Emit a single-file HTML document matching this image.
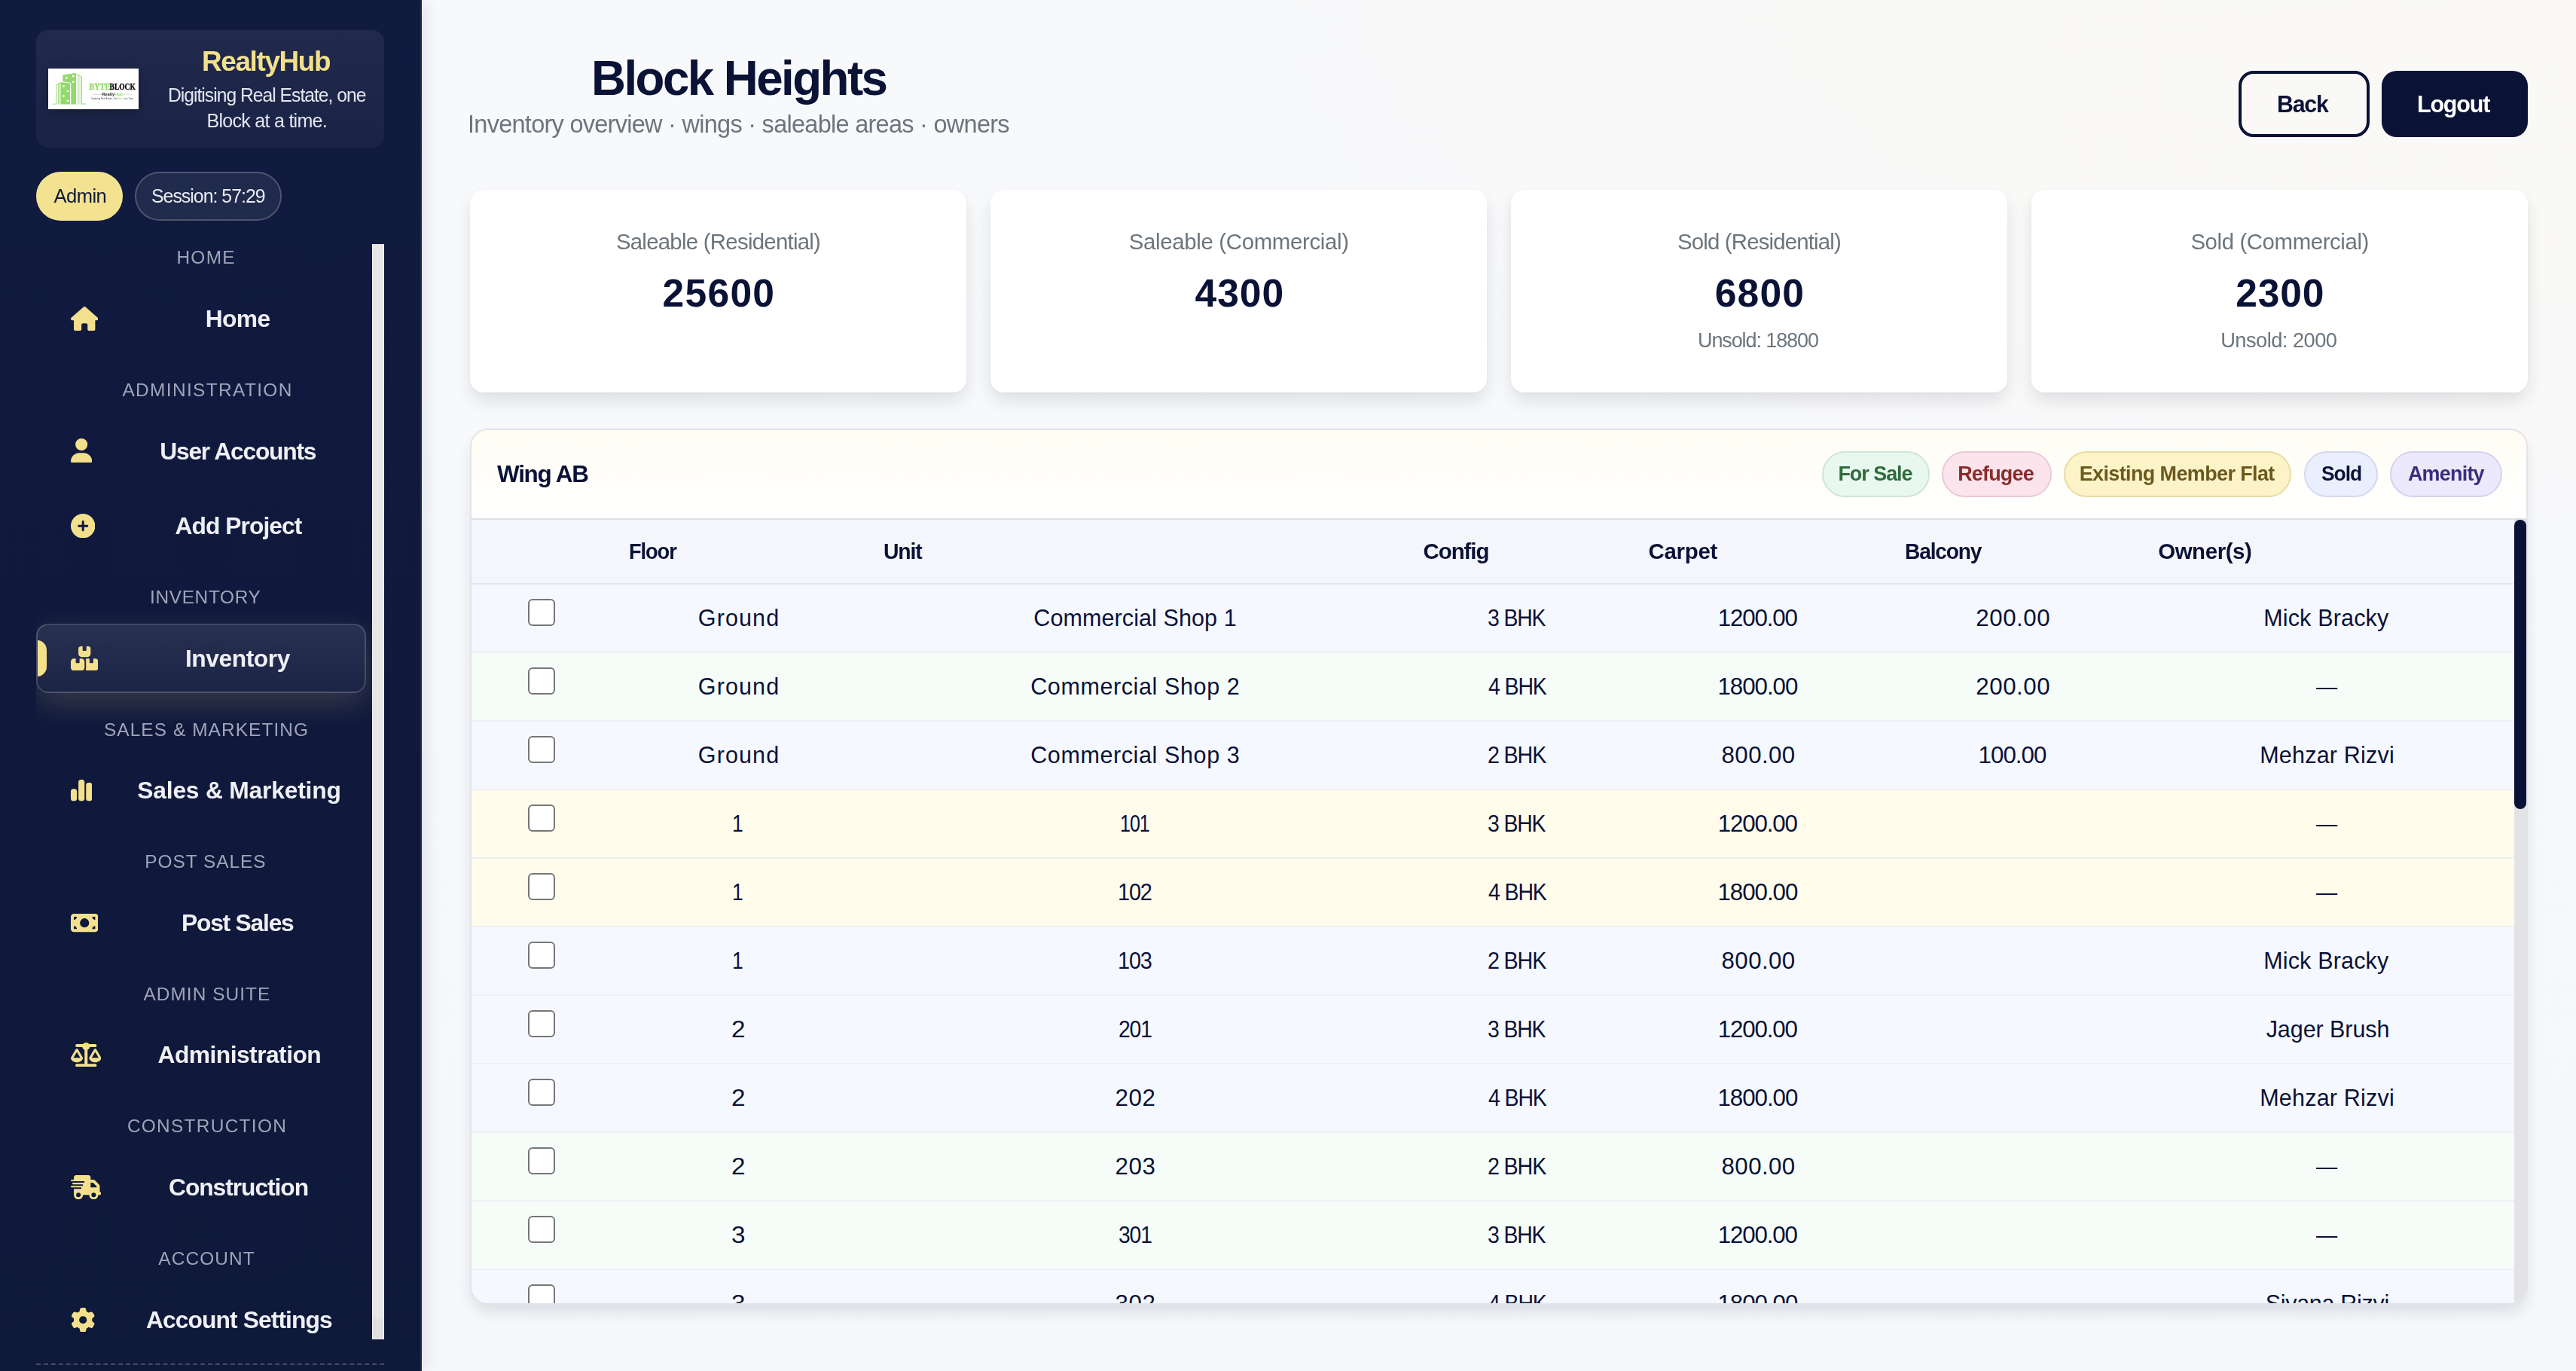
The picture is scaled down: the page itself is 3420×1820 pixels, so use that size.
<!DOCTYPE html>
<html lang="en"><head><meta charset="utf-8"><title>Block Heights – RealtyHub</title>
<style>
*{box-sizing:border-box;margin:0;padding:0}
html,body{width:3420px;height:1820px;overflow:hidden}
body{position:relative;font-family:"Liberation Sans",sans-serif;background:#f6f7fb;
 background-image:radial-gradient(2500px 1000px at 100% 0%,#faf9f6 0%,rgba(250,249,246,.85) 30%,rgba(250,249,246,0) 72%),linear-gradient(180deg,#f8f9fb 0%,#f6f7fb 100%)}
.t{position:absolute;white-space:nowrap;display:block;transform-origin:0 50%}
.ic{position:absolute;display:block}
.abs{position:absolute;display:block}
#side{position:absolute;left:0;top:0;width:560px;height:1820px;background:linear-gradient(180deg,#111b40 0%,#10193c 50%,#0f193a 100%);
 border-right:2px solid #222b4d;box-shadow:4px 0 24px rgba(0,0,0,.11);overflow:hidden}
#brand{left:48px;top:40px;width:462px;height:156px;border-radius:16px;background:linear-gradient(180deg,rgba(255,255,255,.065),rgba(255,255,255,.04))}
#logo{left:64px;top:91px;width:120px;height:54px;background:#fff;box-shadow:0 4px 12px rgba(0,0,0,.28)}
.pill{position:absolute;border-radius:999px}
#navclip{position:absolute;left:48px;top:324px;width:462px;height:1454px;overflow:hidden}
#active{position:absolute;left:0;top:504px;width:437.5px;height:91.5px;border-radius:16px;border:2px solid rgba(255,255,255,.17);
 background:linear-gradient(180deg,rgba(255,255,255,.105),rgba(255,255,255,.05));box-shadow:0 14px 40px rgba(243,224,140,.17);overflow:hidden}
#active i{position:absolute;left:-14px;top:19.5px;width:26px;height:48px;border-radius:13px;background:#f3e08c}
#sbar{position:absolute;left:446px;top:0;width:16px;height:1454px;background:#dfdfdf;border-left:1px solid #f2f2f2;border-right:1px solid #f2f2f2;border-bottom:1px solid #f2f2f2}
#sbar b{position:absolute;left:0;top:0;width:14px;height:1427px;border-radius:0 0 7px 7px;background:#e6e6e6}
#dash{left:48px;top:1810px;width:462px;height:0;border-top:2px dashed rgba(255,255,255,.22)}
.btn{position:absolute;top:94px;height:88px;border-radius:20px}
.card{position:absolute;top:252px;width:659px;height:269px;border-radius:18px;background:#fff;box-shadow:0 12px 26px rgba(12,16,40,.105),0 2px 5px rgba(12,16,40,.03)}
#panel{position:absolute;left:624px;top:569px;width:2732px;height:1163px;border-radius:24px;border:2px solid #e1e4ea;background:#fff;overflow:hidden;
 box-shadow:0 12px 24px -4px rgba(10,12,30,.13)}
#phead{position:absolute;left:0;top:0;width:100%;height:119px;background:linear-gradient(180deg,#fffdf3 0%,#fffefa 55%,#fff 100%);border-bottom:2px solid #dedfe3}
#thead{position:absolute;left:0;top:119px;width:2712px;height:86px;background:#f5f6fb;border-bottom:2px solid #e4e6ec}
.row{position:absolute;left:0;width:2712px;height:91px;border-bottom:2px solid #eff0f5}
.row.s{background:#f6f8ff}.row.f{background:#f6fdf9}.row.e{background:#fffcec}
.cb{position:absolute;left:74.5px;width:36px;height:36px;border:2px solid #767676;border-radius:6px;background:#fff}
#track{position:absolute;right:0;top:119px;width:16px;height:1040px;background:#e3e3e5}
#thumb{position:absolute;right:0;top:119px;width:16px;height:384px;border-radius:8px;background:#0a1236}
#wrap{position:absolute;left:0;top:0;width:3420px;height:1820px;opacity:.999}
</style></head><body><div id="wrap">

<div id="side">
<div class="abs" id="brand"></div>
<div class="abs" id="logo"><svg width="120" height="54" viewBox="0 0 120 54" style="display:block;will-change:transform"><g fill="#93d96b"><path d="M19.3 8.6 36.3 6.1 37 6.4V47.4H30.3V20.3Q30.1 18.9 28.8 18.7L19.3 16.9Z"/><path d="M16.5 18.1 28.4 19.5Q29 19.7 29 20.4V47.4H16.5Z"/><path d="M10.3 21.8 12 20.8V47.4H10.3Z" opacity=".55"/><path d="M13.1 20.2 13.9 19.7V47.4H13.1Z"/><path d="M14.8 19.2 15.7 18.6V47.4H14.8Z"/><path d="M10.3 21.8 16.5 18.1 16.5 19 10.8 22.4Z"/><path d="M37 6.4 45 11.2V46.6H50v.9H44.1V11.8L37 7.5Z"/><path d="M39.3 8.3 40.3 8.9V47.4H39.3Z"/><path d="M41.6 9.7 42.3 10.1V47.4H41.6Z" opacity=".7"/><path d="M42.9 10.5 43.5 10.9V47.4H42.9Z" opacity=".5"/><path d="M6 46.6H10.6V47.5H6Z"/></g><g fill="#fff"><rect x="23.1" y="11.3" width="2.4" height="2.4"/><rect x="32" y="8.9" width="2.4" height="2.4"/><rect x="32" y="16.4" width="2.4" height="2.4"/><rect x="19.2" y="22.3" width="2.4" height="2.4"/><rect x="24.7" y="28.8" width="2.4" height="2.4"/><rect x="19.2" y="35.3" width="2.4" height="2.4"/><rect x="24.7" y="41.6" width="2.4" height="2.4"/></g><text x="54.6" y="28" font-family="Liberation Serif,serif" font-weight="700" font-size="11.6" textLength="27.2" lengthAdjust="spacingAndGlyphs" fill="#8fd868" stroke="#8fd868" stroke-width=".35">BYTE</text><text x="81.6" y="28" font-family="Liberation Serif,serif" font-weight="700" font-size="11.6" textLength="34.2" lengthAdjust="spacingAndGlyphs" fill="#0a0a0a" stroke="#0a0a0a" stroke-width=".35">BLOCK</text><path d="M59.1 34.2H71M99.3 34.2H111.1" stroke="#c9c9c9" stroke-width=".7"/><text x="71.2" y="35.7" font-family="Liberation Sans,sans-serif" font-weight="700" font-size="4.6" textLength="17" lengthAdjust="spacingAndGlyphs" fill="#1a1a1a">Realty</text><text x="88.2" y="35.7" font-family="Liberation Sans,sans-serif" font-weight="700" font-size="4.6" textLength="11" lengthAdjust="spacingAndGlyphs" fill="#93d96b">Hub</text><text x="57.3" y="40.8" font-family="Liberation Sans,sans-serif" font-size="2.7" textLength="55.7" lengthAdjust="spacingAndGlyphs" fill="#444">Digitising Real Estate, One <tspan fill="#93d96b">Block</tspan> at a Time</text></svg>
</div>
<div class="pill" style="left:48px;top:228px;width:115px;height:65px;background:#f3e28f"></div>
<div class="pill" style="left:179px;top:228px;width:195px;height:65px;background:rgba(255,255,255,.07);border:2px solid rgba(255,255,255,.2)"></div>
<div id="navclip"><div id="active"><i></i></div><div id="sbar"><b></b></div></div>
<svg class="ic" style="left:93.7px;top:406.6px;width:36.45px;height:32.4px" viewBox="0 0 576 512"><path fill="#f3e08c" d="M575.8 255.5c0 18-15 32.100-32 32.100h-32l.700 160.200c0 2.700-.200 5.400-.500 8.100V472c0 22.100-17.900 40-40 40H456c-1.100 0-2.200 0-3.300-.100c-1.400 .100-2.800 .100-4.200 .100H416 392c-22.100 0-40-17.900-40-40V448 384c0-17.700-14.300-32-32-32H256c-17.700 0-32 14.300-32 32v64 24c0 22.100-17.900 40-40 40H160 128.100c-1.500 0-3-.100-4.500-.200c-1.200 .100-2.400 .200-3.600 .200H104c-22.100 0-40-17.900-40-40V360c0-.900 0-1.900 .100-2.800V287.600H32c-18 0-32-14-32-32.100c0-9 3-17 10-24L266.400 8c7-7 15-8 22-8s15 2 21.100 7L564.800 231.500c8 7 12 15 11 24z"/></svg>
<svg class="ic" style="left:93.7px;top:582.1px;width:28.35px;height:32.4px" viewBox="0 0 448 512"><path fill="#f3e08c" d="M224 256A128 128 0 1 0 224 0a128 128 0 1 0 0 256zm-45.700 48C79.800 304 0 383.800 0 482.300C0 498.700 13.300 512 29.700 512H418.300c16.400 0 29.700-13.300 29.700-29.700C448 383.800 368.200 304 269.700 304H178.300z"/></svg>
<svg class="ic" style="left:93.7px;top:681.6px;width:32.4px;height:32.4px" viewBox="0 0 512 512"><path fill="#f3e08c" d="M256 512A256 256 0 1 0 256 0a256 256 0 1 0 0 512zM232 344V280H168c-13.300 0-24-10.700-24-24s10.700-24 24-24h64V168c0-13.300 10.700-24 24-24s24 10.700 24 24v64h64c13.300 0 24 10.700 24 24s-10.700 24-24 24H280v64c0 13.300-10.700 24-24 24s-24-10.700-24-24z"/></svg>
<svg class="ic" style="left:93.7px;top:857.6px;width:36.45px;height:32.4px" viewBox="0 0 576 512"><path fill="#f3e08c" d="M248 0H208c-26.500 0-48 21.500-48 48V160c0 35.300 28.700 64 64 64H352c35.300 0 64-28.700 64-64V48c0-26.500-21.500-48-48-48H328V80c0 8.800-7.200 16-16 16H264c-8.800 0-16-7.200-16-16V0zM64 256c-35.300 0-64 28.700-64 64V448c0 35.300 28.700 64 64 64H224c35.300 0 64-28.700 64-64V320c0-35.300-28.700-64-64-64H184v80c0 8.800-7.200 16-16 16H120c-8.800 0-16-7.200-16-16V256H64zM352 512H512c35.300 0 64-28.700 64-64V320c0-35.300-28.700-64-64-64H472v80c0 8.800-7.200 16-16 16H408c-8.800 0-16-7.200-16-16V256H352c-15 0-28.800 5.100-39.700 13.800c4.900 10.400 7.700 22 7.700 34.200V464c0 12.200-2.800 23.800-7.700 34.200C323.200 506.900 337 512 352 512z"/></svg>
<svg class="ic" style="left:93.7px;top:1032.7px;width:28.35px;height:32.4px" viewBox="0 0 448 512"><path fill="#f3e08c" d="M160 80c0-26.500 21.500-48 48-48h32c26.500 0 48 21.500 48 48V432c0 26.500-21.500 48-48 48H208c-26.500 0-48-21.500-48-48V80zM0 272c0-26.500 21.500-48 48-48H80c26.500 0 48 21.500 48 48V432c0 26.500-21.500 48-48 48H48c-26.500 0-48-21.500-48-48V272zM368 96h32c26.500 0 48 21.500 48 48V432c0 26.500-21.500 48-48 48H368c-26.500 0-48-21.500-48-48V144c0-26.500 21.500-48 48-48z"/></svg>
<svg class="ic" style="left:93.7px;top:1208.8px;width:36.45px;height:32.4px" viewBox="0 0 576 512"><path fill="#f3e08c" d="M64 64C28.700 64 0 92.700 0 128V384c0 35.300 28.700 64 64 64H512c35.300 0 64-28.700 64-64V128c0-35.300-28.700-64-64-64H64zm64 320H64V320c35.300 0 64 28.700 64 64zM64 192V128h64c0 35.300-28.700 64-64 64zM448 384c0-35.300 28.700-64 64-64v64H448zm64-192c-35.300 0-64-28.700-64-64h64v64zM288 160a96 96 0 1 1 0 192 96 96 0 1 1 0-192z"/></svg>
<svg class="ic" style="left:93.7px;top:1383.9px;width:40.5px;height:32.4px" viewBox="0 0 640 512"><path fill="#f3e08c" d="M384 32H512c17.700 0 32 14.300 32 32s-14.300 32-32 32H398.400c-5.200 25.800-22.900 47.100-46.400 57.300V448H512c17.700 0 32 14.300 32 32s-14.300 32-32 32H320 128c-17.700 0-32-14.300-32-32s14.300-32 32-32H288V153.300c-23.500-10.300-41.200-31.600-46.400-57.300H128c-17.700 0-32-14.300-32-32s14.300-32 32-32H256c14.600-19.400 37.800-32 64-32s49.400 12.600 64 32zm55.600 288H584.400L512 195.800 439.600 320zM512 416c-62.900 0-115.200-34-126-78.900c-2.600-11 1-22.300 6.700-32.100l95.200-163.200c5-8.600 14.200-13.800 24.100-13.800s19.100 5.300 24.100 13.800l95.200 163.200c5.700 9.800 9.300 21.100 6.700 32.100C627.200 382 574.900 416 512 416zM126.800 195.800L54.400 320H199.300L126.800 195.800zM.9 337.100c-2.600-11 1-22.300 6.700-32.100l95.200-163.200c5-8.600 14.200-13.800 24.100-13.800s19.100 5.300 24.100 13.800l95.200 163.200c5.700 9.800 9.300 21.100 6.700 32.100C242 382 189.700 416 126.800 416S11.700 382 .9 337.100z"/></svg>
<svg class="ic" style="left:93.7px;top:1560.0px;width:40.5px;height:32.4px" viewBox="0 0 640 512"><path fill="#f3e08c" d="M112 0C85.500 0 64 21.500 64 48V96H16c-8.800 0-16 7.200-16 16s7.200 16 16 16H64 272c8.800 0 16 7.200 16 16s-7.200 16-16 16H64 48c-8.800 0-16 7.200-16 16s7.200 16 16 16H64 240c8.800 0 16 7.200 16 16s-7.200 16-16 16H64 16c-8.800 0-16 7.200-16 16s7.200 16 16 16H64 208c8.800 0 16 7.200 16 16s-7.200 16-16 16H64V416c0 53 43 96 96 96s96-43 96-96H384c0 53 43 96 96 96s96-43 96-96h32c17.700 0 32-14.300 32-32s-14.300-32-32-32V288 256 237.300c0-17-6.700-33.300-18.700-45.300L512 114.700c-12-12-28.300-18.700-45.300-18.700H416V48c0-26.500-21.500-48-48-48H112zM544 237.300V256H416V160h50.700L544 237.300zM160 368a48 48 0 1 1 0 96 48 48 0 1 1 0-96zm272 48a48 48 0 1 1 96 0 48 48 0 1 1 -96 0z"/></svg>
<svg class="ic" style="left:93.7px;top:1735.7px;width:32.4px;height:32.4px" viewBox="0 0 512 512"><path fill="#f3e08c" d="M495.900 166.600c3.200 8.700 .500 18.400-6.400 24.600l-43.300 39.400c1.100 8.300 1.700 16.800 1.700 25.400s-.600 17.100-1.700 25.400l43.300 39.400c6.900 6.200 9.600 15.900 6.400 24.600c-4.400 11.900-9.700 23.300-15.800 34.300l-4.700 8.100c-6.600 11-14 21.400-22.100 31.200c-5.900 7.200-15.700 9.600-24.500 6.800l-55.700-17.700c-13.400 10.300-28.200 18.900-44 25.400l-12.500 57.100c-2 9.100-9 16.300-18.200 17.800c-13.800 2.300-28 3.500-42.500 3.500s-28.700-1.200-42.500-3.500c-9.200-1.500-16.200-8.700-18.200-17.800l-12.500-57.100c-15.800-6.500-30.600-15.100-44-25.400L83.100 425.900c-8.800 2.800-18.600 .300-24.500-6.800c-8.100-9.800-15.500-20.200-22.100-31.200l-4.700-8.100c-6.100-11-11.400-22.400-15.800-34.300c-3.200-8.700-.500-18.400 6.400-24.600l43.300-39.400C64.600 273.100 64 264.600 64 256s.600-17.100 1.700-25.400L22.400 191.200c-6.900-6.200-9.600-15.900-6.400-24.600c4.400-11.900 9.700-23.300 15.800-34.300l4.700-8.100c6.600-11 14-21.400 22.100-31.200c5.900-7.200 15.700-9.600 24.500-6.800l55.700 17.700c13.400-10.300 28.200-18.900 44-25.400l12.500-57.100c2-9.100 9-16.300 18.200-17.800C227.300 1.200 241.500 0 256 0s28.700 1.200 42.500 3.500c9.200 1.500 16.200 8.700 18.200 17.800l12.500 57.100c15.800 6.500 30.600 15.100 44 25.400l55.700-17.700c8.800-2.800 18.600-.300 24.500 6.800c8.100 9.800 15.500 20.200 22.100 31.200l4.700 8.100c6.100 11 11.400 22.400 15.800 34.300zM256 336a80 80 0 1 0 0-160 80 80 0 1 0 0 160z"/></svg>
<div class="abs" id="dash"></div>
<span class="t" style="left:268.0px;top:61.2px;font-size:36.88px;line-height:41px;color:#f3e08c;font-weight:700;letter-spacing:-1.354px;">RealtyHub</span>
<span class="t" style="left:222.54px;top:111.7px;font-size:25.11px;line-height:28px;color:#e3e5ef;letter-spacing:-1.004px;transform:scaleX(0.9815);">Digitising Real Estate, one</span>
<span class="t" style="left:274.5px;top:146.4px;font-size:25.11px;line-height:28px;color:#e3e5ef;letter-spacing:-0.758px;">Block at a time.</span>
<span class="t" style="left:71.4px;top:246px;font-size:25.53px;line-height:28px;color:#10183a;letter-spacing:-0.483px;">Admin</span>
<span class="t" style="left:201.03px;top:246px;font-size:25.53px;line-height:28px;color:#e9ebf3;letter-spacing:-1.021px;transform:scaleX(0.9743);">Session: 57:29</span>
<span class="t" style="left:234.4px;top:328px;font-size:24.42px;line-height:27px;color:#a0a4b8;letter-spacing:1.32px;">HOME</span>
<span class="t" style="left:162.4px;top:504.2px;font-size:24.42px;line-height:27px;color:#a0a4b8;letter-spacing:1.379px;">ADMINISTRATION</span>
<span class="t" style="left:199.0px;top:779.2px;font-size:24.42px;line-height:27px;color:#a0a4b8;letter-spacing:0.659px;">INVENTORY</span>
<span class="t" style="left:137.9px;top:954.6px;font-size:24.42px;line-height:27px;color:#a0a4b8;letter-spacing:1.091px;">SALES &amp; MARKETING</span>
<span class="t" style="left:192.2px;top:1129.9px;font-size:24.42px;line-height:27px;color:#a0a4b8;letter-spacing:0.984px;">POST SALES</span>
<span class="t" style="left:190.5px;top:1306.2px;font-size:24.42px;line-height:27px;color:#a0a4b8;letter-spacing:1.038px;">ADMIN SUITE</span>
<span class="t" style="left:168.9px;top:1481px;font-size:24.42px;line-height:27px;color:#a0a4b8;letter-spacing:1.303px;">CONSTRUCTION</span>
<span class="t" style="left:210.3px;top:1657.3px;font-size:24.42px;line-height:27px;color:#a0a4b8;letter-spacing:1.123px;">ACCOUNT</span>
<span class="t" style="left:272.8px;top:405px;font-size:31.77px;line-height:36px;color:#eff0f6;font-weight:700;letter-spacing:-0.663px;">Home</span>
<span class="t" style="left:212.3px;top:580.5px;font-size:31.77px;line-height:36px;color:#eff0f6;font-weight:700;letter-spacing:-1.244px;">User Accounts</span>
<span class="t" style="left:232.4px;top:680px;font-size:31.77px;line-height:36px;color:#eff0f6;font-weight:700;letter-spacing:-0.928px;">Add Project</span>
<span class="t" style="left:246.0px;top:856px;font-size:31.77px;line-height:36px;color:#eff0f6;font-weight:700;letter-spacing:-0.451px;">Inventory</span>
<span class="t" style="left:182.3px;top:1031.1px;font-size:31.77px;line-height:36px;color:#eff0f6;font-weight:700;letter-spacing:-0.196px;">Sales &amp; Marketing</span>
<span class="t" style="left:241.0px;top:1207.2px;font-size:31.77px;line-height:36px;color:#eff0f6;font-weight:700;letter-spacing:-1.212px;">Post Sales</span>
<span class="t" style="left:209.6px;top:1382.3px;font-size:31.77px;line-height:36px;color:#eff0f6;font-weight:700;letter-spacing:-0.54px;">Administration</span>
<span class="t" style="left:224.0px;top:1558.4px;font-size:31.77px;line-height:36px;color:#eff0f6;font-weight:700;letter-spacing:-1.048px;">Construction</span>
<span class="t" style="left:194.0px;top:1734.1px;font-size:31.77px;line-height:36px;color:#eff0f6;font-weight:700;letter-spacing:-0.902px;">Account Settings</span>
</div>
<div class="btn" style="left:2972px;width:174px;border:4px solid #0a1236"></div>
<div class="btn" style="left:3162px;width:194px;background:#0a1236"></div>
<div class="card" style="left:624px"></div>
<div class="card" style="left:1315px"></div>
<div class="card" style="left:2006px"></div>
<div class="card" style="left:2697px"></div>
<div id="panel"><div id="phead"></div><div id="thead"></div>
<div class="row s" style="top:205px"><span class="cb" style="top:19px"></span></div>
<div class="row f" style="top:296px"><span class="cb" style="top:19px"></span></div>
<div class="row s" style="top:387px"><span class="cb" style="top:19px"></span></div>
<div class="row e" style="top:478px"><span class="cb" style="top:19px"></span></div>
<div class="row e" style="top:569px"><span class="cb" style="top:19px"></span></div>
<div class="row s" style="top:660px"><span class="cb" style="top:19px"></span></div>
<div class="row s" style="top:751px"><span class="cb" style="top:19px"></span></div>
<div class="row s" style="top:842px"><span class="cb" style="top:19px"></span></div>
<div class="row f" style="top:933px"><span class="cb" style="top:19px"></span></div>
<div class="row f" style="top:1024px"><span class="cb" style="top:19px"></span></div>
<div class="row s" style="top:1115px"><span class="cb" style="top:19px"></span></div>
<div id="track"></div><div id="thumb"></div>
<span class="t" style="left:300.85px;top:231.75px;font-size:30.5px;line-height:34px;color:#0a1236;letter-spacing:1.106px;">Ground</span>
<span class="t" style="left:746.3px;top:231.75px;font-size:30.5px;line-height:34px;color:#0a1236;letter-spacing:0.096px;">Commercial Shop 1</span>
<span class="t" style="left:1349.32px;top:231.75px;font-size:31.25px;line-height:35px;color:#0a1236;letter-spacing:-1.25px;transform:scaleX(0.9086);">3 BHK</span>
<span class="t" style="left:1654.82px;top:231.75px;font-size:31.25px;line-height:35px;color:#0a1236;letter-spacing:-1.139px;">1200.00</span>
<span class="t" style="left:1997.3px;top:231.75px;font-size:31.25px;line-height:35px;color:#0a1236;letter-spacing:0.56px;">200.00</span>
<span class="t" style="left:2379.2px;top:231.75px;font-size:30.5px;line-height:34px;color:#0a1236;letter-spacing:0.168px;">Mick Bracky</span>
<span class="t" style="left:300.85px;top:322.75px;font-size:30.5px;line-height:34px;color:#0a1236;letter-spacing:1.106px;">Ground</span>
<span class="t" style="left:742.2px;top:322.75px;font-size:30.5px;line-height:34px;color:#0a1236;letter-spacing:0.608px;">Commercial Shop 2</span>
<span class="t" style="left:1349.6px;top:322.75px;font-size:31.25px;line-height:35px;color:#0a1236;letter-spacing:-1.25px;transform:scaleX(0.9126);">4 BHK</span>
<span class="t" style="left:1654.45px;top:322.75px;font-size:31.25px;line-height:35px;color:#0a1236;letter-spacing:-1.014px;">1800.00</span>
<span class="t" style="left:1997.3px;top:322.75px;font-size:31.25px;line-height:35px;color:#0a1236;letter-spacing:0.56px;">200.00</span>
<span class="t" style="left:2449.2px;top:322.75px;font-size:31.25px;line-height:35px;color:#0a1236;transform:scaleX(0.9);">—</span>
<span class="t" style="left:300.85px;top:413.75px;font-size:30.5px;line-height:34px;color:#0a1236;letter-spacing:1.106px;">Ground</span>
<span class="t" style="left:742.2px;top:413.75px;font-size:30.5px;line-height:34px;color:#0a1236;letter-spacing:0.608px;">Commercial Shop 3</span>
<span class="t" style="left:1348.93px;top:413.75px;font-size:31.25px;line-height:35px;color:#0a1236;letter-spacing:-1.25px;transform:scaleX(0.9175);">2 BHK</span>
<span class="t" style="left:1659.57px;top:413.75px;font-size:31.25px;line-height:35px;color:#0a1236;letter-spacing:0.41px;">800.00</span>
<span class="t" style="left:2000.55px;top:413.75px;font-size:31.25px;line-height:35px;color:#0a1236;letter-spacing:-0.94px;">100.00</span>
<span class="t" style="left:2374.25px;top:413.75px;font-size:30.5px;line-height:34px;color:#0a1236;letter-spacing:0.202px;">Mehzar Rizvi</span>
<span class="t" style="left:346.35px;top:504.75px;font-size:31.25px;line-height:35px;color:#0a1236;transform:scaleX(0.85);">1</span>
<span class="t" style="left:860.9px;top:504.75px;font-size:31.25px;line-height:35px;color:#0a1236;letter-spacing:-1.25px;transform:scaleX(0.8);">101</span>
<span class="t" style="left:1349.32px;top:504.75px;font-size:31.25px;line-height:35px;color:#0a1236;letter-spacing:-1.25px;transform:scaleX(0.9086);">3 BHK</span>
<span class="t" style="left:1654.82px;top:504.75px;font-size:31.25px;line-height:35px;color:#0a1236;letter-spacing:-1.139px;">1200.00</span>
<span class="t" style="left:2449.2px;top:504.75px;font-size:31.25px;line-height:35px;color:#0a1236;transform:scaleX(0.9);">—</span>
<span class="t" style="left:346.35px;top:595.75px;font-size:31.25px;line-height:35px;color:#0a1236;transform:scaleX(0.85);">1</span>
<span class="t" style="left:857.8px;top:595.75px;font-size:31.25px;line-height:35px;color:#0a1236;letter-spacing:-1.25px;transform:scaleX(0.9231);">102</span>
<span class="t" style="left:1349.6px;top:595.75px;font-size:31.25px;line-height:35px;color:#0a1236;letter-spacing:-1.25px;transform:scaleX(0.9126);">4 BHK</span>
<span class="t" style="left:1654.45px;top:595.75px;font-size:31.25px;line-height:35px;color:#0a1236;letter-spacing:-1.014px;">1800.00</span>
<span class="t" style="left:2449.2px;top:595.75px;font-size:31.25px;line-height:35px;color:#0a1236;transform:scaleX(0.9);">—</span>
<span class="t" style="left:346.35px;top:686.75px;font-size:31.25px;line-height:35px;color:#0a1236;transform:scaleX(0.85);">1</span>
<span class="t" style="left:857.8px;top:686.75px;font-size:31.25px;line-height:35px;color:#0a1236;letter-spacing:-1.25px;transform:scaleX(0.9231);">103</span>
<span class="t" style="left:1348.93px;top:686.75px;font-size:31.25px;line-height:35px;color:#0a1236;letter-spacing:-1.25px;transform:scaleX(0.9175);">2 BHK</span>
<span class="t" style="left:1659.57px;top:686.75px;font-size:31.25px;line-height:35px;color:#0a1236;letter-spacing:0.41px;">800.00</span>
<span class="t" style="left:2379.2px;top:686.75px;font-size:30.5px;line-height:34px;color:#0a1236;letter-spacing:0.168px;">Mick Bracky</span>
<span class="t" style="left:344.93px;top:777.75px;font-size:31.25px;line-height:35px;color:#0a1236;transform:scaleX(1.0667);">2</span>
<span class="t" style="left:858.75px;top:777.75px;font-size:31.25px;line-height:35px;color:#0a1236;letter-spacing:-1.25px;transform:scaleX(0.9035);">201</span>
<span class="t" style="left:1349.32px;top:777.75px;font-size:31.25px;line-height:35px;color:#0a1236;letter-spacing:-1.25px;transform:scaleX(0.9086);">3 BHK</span>
<span class="t" style="left:1654.82px;top:777.75px;font-size:31.25px;line-height:35px;color:#0a1236;letter-spacing:-1.139px;">1200.00</span>
<span class="t" style="left:2382.7px;top:777.75px;font-size:30.5px;line-height:34px;color:#0a1236;letter-spacing:-0.068px;">Jager Brush</span>
<span class="t" style="left:344.93px;top:868.75px;font-size:31.25px;line-height:35px;color:#0a1236;transform:scaleX(1.0667);">2</span>
<span class="t" style="left:854.4px;top:868.75px;font-size:31.25px;line-height:35px;color:#0a1236;letter-spacing:0.72px;">202</span>
<span class="t" style="left:1349.6px;top:868.75px;font-size:31.25px;line-height:35px;color:#0a1236;letter-spacing:-1.25px;transform:scaleX(0.9126);">4 BHK</span>
<span class="t" style="left:1654.45px;top:868.75px;font-size:31.25px;line-height:35px;color:#0a1236;letter-spacing:-1.014px;">1800.00</span>
<span class="t" style="left:2374.25px;top:868.75px;font-size:30.5px;line-height:34px;color:#0a1236;letter-spacing:0.202px;">Mehzar Rizvi</span>
<span class="t" style="left:344.93px;top:959.75px;font-size:31.25px;line-height:35px;color:#0a1236;transform:scaleX(1.0667);">2</span>
<span class="t" style="left:854.4px;top:959.75px;font-size:31.25px;line-height:35px;color:#0a1236;letter-spacing:0.72px;">203</span>
<span class="t" style="left:1348.93px;top:959.75px;font-size:31.25px;line-height:35px;color:#0a1236;letter-spacing:-1.25px;transform:scaleX(0.9175);">2 BHK</span>
<span class="t" style="left:1659.57px;top:959.75px;font-size:31.25px;line-height:35px;color:#0a1236;letter-spacing:0.41px;">800.00</span>
<span class="t" style="left:2449.2px;top:959.75px;font-size:31.25px;line-height:35px;color:#0a1236;transform:scaleX(0.9);">—</span>
<span class="t" style="left:344.93px;top:1050.75px;font-size:31.25px;line-height:35px;color:#0a1236;transform:scaleX(1.0667);">3</span>
<span class="t" style="left:858.75px;top:1050.75px;font-size:31.25px;line-height:35px;color:#0a1236;letter-spacing:-1.25px;transform:scaleX(0.9035);">301</span>
<span class="t" style="left:1349.32px;top:1050.75px;font-size:31.25px;line-height:35px;color:#0a1236;letter-spacing:-1.25px;transform:scaleX(0.9086);">3 BHK</span>
<span class="t" style="left:1654.82px;top:1050.75px;font-size:31.25px;line-height:35px;color:#0a1236;letter-spacing:-1.139px;">1200.00</span>
<span class="t" style="left:2449.2px;top:1050.75px;font-size:31.25px;line-height:35px;color:#0a1236;transform:scaleX(0.9);">—</span>
<span class="t" style="left:344.93px;top:1141.75px;font-size:31.25px;line-height:35px;color:#0a1236;transform:scaleX(1.0667);">3</span>
<span class="t" style="left:854.4px;top:1141.75px;font-size:31.25px;line-height:35px;color:#0a1236;letter-spacing:0.72px;">302</span>
<span class="t" style="left:1349.6px;top:1141.75px;font-size:31.25px;line-height:35px;color:#0a1236;letter-spacing:-1.25px;transform:scaleX(0.9126);">4 BHK</span>
<span class="t" style="left:1654.45px;top:1141.75px;font-size:31.25px;line-height:35px;color:#0a1236;letter-spacing:-1.014px;">1800.00</span>
<span class="t" style="left:2381.7px;top:1141.75px;font-size:30.5px;line-height:34px;color:#0a1236;letter-spacing:-0.294px;">Siyana Rizvi</span>
</div>
<div class="pill" style="left:2418.8px;top:598.8px;width:143.2px;height:61px;background:#e8f8ef;border:2px solid #cde6d6"></div>
<div class="pill" style="left:2578px;top:598.8px;width:145.7px;height:61px;background:#fbe4ec;border:2px solid #ebc9d6"></div>
<div class="pill" style="left:2740.3px;top:598.8px;width:302.1px;height:61px;background:#fdf3c8;border:2px solid #e8dca2"></div>
<div class="pill" style="left:3059px;top:598.8px;width:97.9px;height:61px;background:#e9effd;border:2px solid #d2d9ee"></div>
<div class="pill" style="left:3173px;top:598.8px;width:148.6px;height:61px;background:#ede9fc;border:2px solid #d7d1ee"></div>
<span class="t" style="left:785.05px;top:68.2px;font-size:64.54px;line-height:72px;color:#0a1236;font-weight:700;letter-spacing:-2.582px;transform:scaleX(0.9867);">Block Heights</span>
<span class="t" style="left:621.0px;top:146.5px;font-size:32.48px;line-height:36px;color:#6c757d;letter-spacing:-0.717px;">Inventory overview · wings · saleable areas · owners</span>
<span class="t" style="left:3023.06px;top:120.8px;font-size:31.35px;line-height:35px;color:#0a1236;font-weight:700;letter-spacing:-1.254px;transform:scaleX(0.9679);">Back</span>
<span class="t" style="left:3208.95px;top:120.8px;font-size:31.35px;line-height:35px;color:#ffffff;font-weight:700;letter-spacing:-1.254px;transform:scaleX(0.974);">Logout</span>
<span class="t" style="left:817.88px;top:304.25px;font-size:29.36px;line-height:33px;color:#6c757d;letter-spacing:-0.724px;">Saleable (Residential)</span>
<span class="t" style="left:1498.8px;top:304.25px;font-size:29.36px;line-height:33px;color:#6c757d;letter-spacing:-0.32px;">Saleable (Commercial)</span>
<span class="t" style="left:2227.0px;top:304.25px;font-size:29.36px;line-height:33px;color:#6c757d;letter-spacing:-0.82px;">Sold (Residential)</span>
<span class="t" style="left:2908.4px;top:304.25px;font-size:29.36px;line-height:33px;color:#6c757d;letter-spacing:-0.381px;">Sold (Commercial)</span>
<span class="t" style="left:879.62px;top:359.75px;font-size:51.6px;line-height:58px;color:#0a1236;font-weight:700;letter-spacing:1.244px;">25600</span>
<span class="t" style="left:1586.6px;top:359.75px;font-size:51.6px;line-height:58px;color:#0a1236;font-weight:700;letter-spacing:0.906px;">4300</span>
<span class="t" style="left:2276.75px;top:359.75px;font-size:51.6px;line-height:58px;color:#0a1236;font-weight:700;letter-spacing:1.139px;">6800</span>
<span class="t" style="left:2968.2px;top:359.75px;font-size:51.6px;line-height:58px;color:#0a1236;font-weight:700;letter-spacing:0.839px;">2300</span>
<span class="t" style="left:2254.15px;top:436.25px;font-size:27.3px;line-height:31px;color:#6c757d;letter-spacing:-1.092px;transform:scaleX(0.9875);">Unsold: 18800</span>
<span class="t" style="left:2948.15px;top:436.25px;font-size:27.3px;line-height:31px;color:#6c757d;letter-spacing:-0.544px;">Unsold: 2000</span>
<span class="t" style="left:659.6px;top:611px;font-size:31.91px;line-height:36px;color:#0a1236;font-weight:700;letter-spacing:-1.276px;transform:scaleX(0.9853);">Wing AB</span>
<span class="t" style="left:2440.4px;top:614.4px;font-size:26.95px;line-height:30px;color:#2f6b3c;font-weight:700;letter-spacing:-1.016px;">For Sale</span>
<span class="t" style="left:2599.2px;top:614.4px;font-size:26.95px;line-height:30px;color:#8c2b2b;font-weight:700;letter-spacing:-0.799px;">Refugee</span>
<span class="t" style="left:2760.7px;top:614.4px;font-size:26.95px;line-height:30px;color:#6b591d;font-weight:700;letter-spacing:-0.598px;">Existing Member Flat</span>
<span class="t" style="left:3081.6px;top:614.4px;font-size:26.95px;line-height:30px;color:#0a1236;font-weight:700;letter-spacing:-1.078px;transform:scaleX(0.9819);">Sold</span>
<span class="t" style="left:3196.9px;top:614.4px;font-size:26.95px;line-height:30px;color:#3a2d7c;font-weight:700;letter-spacing:-0.766px;">Amenity</span>
<span class="t" style="left:835.27px;top:715px;font-size:29.43px;line-height:33px;color:#0a1236;font-weight:700;letter-spacing:-1.177px;transform:scaleX(0.9261);">Floor</span>
<span class="t" style="left:1173.04px;top:715px;font-size:29.43px;line-height:33px;color:#0a1236;font-weight:700;letter-spacing:-1.177px;transform:scaleX(0.9648);">Unit</span>
<span class="t" style="left:1889.5px;top:715px;font-size:29.43px;line-height:33px;color:#0a1236;font-weight:700;letter-spacing:-1.033px;">Config</span>
<span class="t" style="left:2188.5px;top:715px;font-size:29.43px;line-height:33px;color:#0a1236;font-weight:700;letter-spacing:-0.279px;">Carpet</span>
<span class="t" style="left:2528.75px;top:715px;font-size:29.43px;line-height:33px;color:#0a1236;font-weight:700;letter-spacing:-1.177px;transform:scaleX(0.9539);">Balcony</span>
<span class="t" style="left:2865.2px;top:715px;font-size:29.43px;line-height:33px;color:#0a1236;font-weight:700;letter-spacing:-0.417px;">Owner(s)</span>
</div><script>(function(){var w=window.innerWidth;if(w&&Math.abs(w-3420)>2){document.documentElement.style.width="auto";document.documentElement.style.height="auto";document.body.style.zoom=w/3420;}})();</script></body></html>
